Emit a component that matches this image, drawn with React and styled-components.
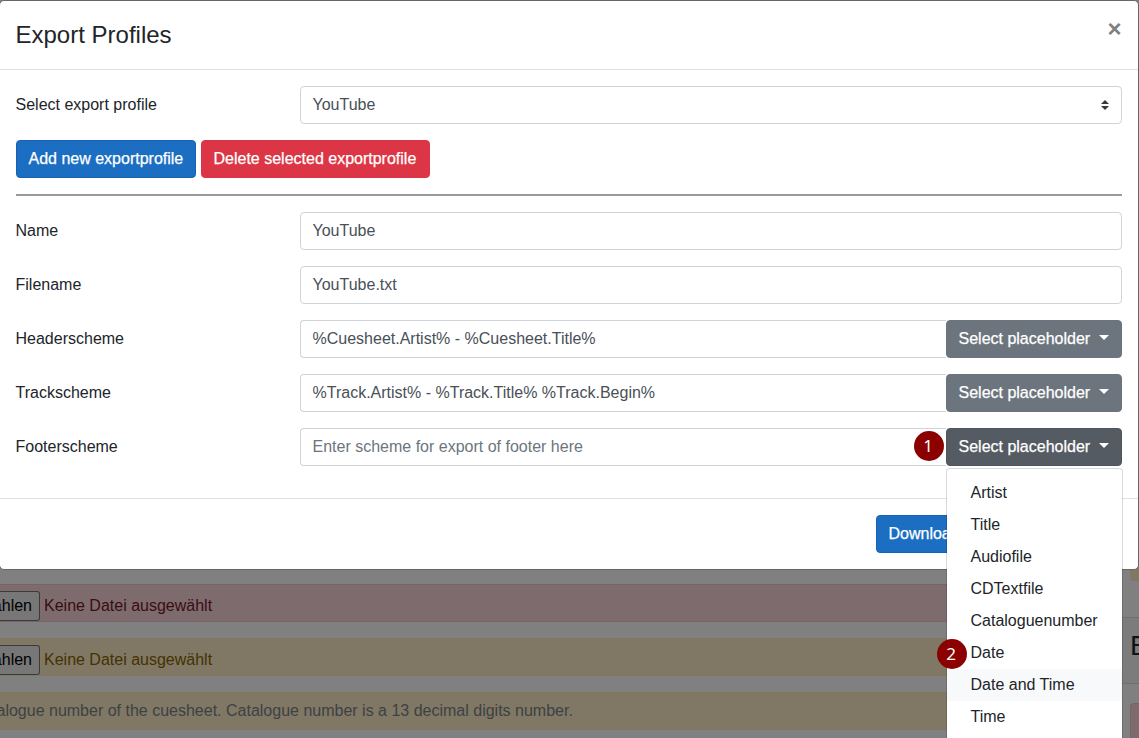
import React from "react";
import styled, { createGlobalStyle, css } from "styled-components";

const GlobalStyle = createGlobalStyle`
  *, *::before, *::after { box-sizing: border-box; }
  html, body { margin: 0; height: 100%; overflow: hidden; }
  body {
    font: 400 16px/1.5 "Liberation Sans", Arial, sans-serif;
    color: #212529;
    background: #808080;
  }
`;

const Screen = styled.div`
  position: relative;
  height: 738px;
  width: 1139px;
  overflow: hidden;
`;

const Page = styled.div`
  display: flex;
  justify-content: space-between;
  height: 100%;
`;

const CuesheetColumn = styled.div`
  display: flex;
  flex-direction: column;
  gap: 16px;
  width: 1017px;
  padding-top: 584px;
`;

const tones = {
  danger: css`background: #7e6b6d; border-color: #7a6366; color: #390e13;`,
  warning: css`background: #807864; border-color: #807760; color: #433202;`,
  muted: css`background: #807864; border-color: #807760; color: #3c4145;`,
};

const Alert = styled.div`
  display: flex;
  align-items: center;
  flex: none;
  gap: 4px;
  height: 38px;
  border: 1px solid;
  border-left: 0;
  white-space: nowrap;
  ${(p) => tones[p.$tone]}
`;

const FileButton = styled.span`
  display: flex;
  align-items: center;
  justify-content: flex-end;
  width: 40px;
  height: 30px;
  margin-top: 6px;
  padding-right: 7px;
  border: 1px solid #3b3b3b;
  border-left: 0;
  border-radius: 0 3px 3px 0;
  background: #777;
  color: #000;
  overflow: hidden;
`;

const FileName = styled.span`
  padding-top: 5px;
`;

const Hint = styled.span`
  margin-left: -3.5px;
`;

const TrackColumn = styled.div`
  display: flex;
  flex-direction: column;
  width: 17px;
  padding-top: 543px;
`;

const TrackField = styled.div`
  flex: none;
  height: 38px;
  margin-left: 8px;
  border: 1px solid;
  border-right: 0;
  border-radius: 4px 0 0 4px;
  ${(p) => tones[p.$tone]}
`;

const TrackHeading = styled.div`
  display: flex;
  align-items: center;
  flex: none;
  height: 67px;
  margin: 36px 0 19px;
  padding: 0 0 9px 8px;
  border: 1px solid #707070;
  border-width: 1px 0;
  background: #7c7c7c;
  font-size: 28px;
  line-height: 1;
  color: #101214;
  overflow: hidden;
`;

const Dialog = styled.section`
  position: absolute;
  top: 0;
  left: -1px;
  width: 1140px;
  height: 570px;
  border: 1px solid #666;
  border-radius: 5px;
  background: #fff;
`;

const DialogHeader = styled.header`
  display: flex;
  justify-content: space-between;
  height: 69px;
  padding: 16px 15.5px;
  border-bottom: 1px solid #dee2e6;
`;

const Title = styled.h4`
  margin: 0;
  font-size: 24px;
  font-weight: 400;
  line-height: 36px;
`;

const CloseButton = styled.button`
  display: flex;
  align-items: flex-start;
  justify-content: center;
  width: 16px;
  padding: 0;
  border: 0;
  background: none;
  color: #808080;
  font: 700 24px/23px "Liberation Sans", Arial, sans-serif;
`;

const DialogBody = styled.div`
  display: flex;
  flex-direction: column;
  gap: 16px;
  padding: 16px 16px 32px;
`;

const FormRow = styled.div`
  display: grid;
  grid-template-columns: 284px 1fr;
  height: 38px;
`;

const Label = styled.label`
  line-height: 24px;
  padding-top: 7px;
  margin-left: -0.5px;
`;

const Field = styled.div`
  display: flex;
  min-width: 0;
`;

const Control = styled.div`
  display: flex;
  align-items: center;
  justify-content: space-between;
  flex: 1;
  padding: 0 12px 1px 11.5px;
  border: 1px solid #ced4da;
  border-right-width: ${(p) => (p.$joined ? 0 : "1px")};
  border-radius: ${(p) => (p.$joined ? "4px 0 0 4px" : "4px")};
  color: ${(p) => (p.$placeholder ? "#6c757d" : "#495057")};
`;

const buttonColors = {
  primary: css`background: #1b6ec2; border-color: #1861ac;`,
  danger: css`background: #dc3545; border-color: #dc3545;`,
  secondary: css`background: #6c757d; border-color: #6c757d;`,
  active: css`background: #545b62; border-color: #4e555b;`,
};

const Button = styled.button`
  display: flex;
  align-items: center;
  flex: none;
  height: 38px;
  width: ${(p) => p.$width}px;
  padding: 0 0 1px 11.5px;
  border: 1px solid;
  border-radius: 4px;
  color: #fff;
  font: inherit;
  -webkit-text-stroke: 0.25px #fff;
  white-space: nowrap;
  ${(p) => buttonColors[p.$color]}
`;

const Caret = styled.span`
  width: 0;
  height: 0;
  margin: 0 0 2px 8.5px;
  border: 5px solid transparent;
  border-top-color: #fff;
  border-bottom: 0;
`;

const ButtonRow = styled.div`
  display: flex;
  gap: 5px;
`;

const Divider = styled.hr`
  width: 100%;
  height: 2px;
  margin: 0;
  border: 0;
  background: #999;
`;

const DialogFooter = styled.footer`
  display: flex;
  padding: 16px 16px 16px 876px;
  border-top: 1px solid #dee2e6;
`;

const Dropdown = styled.div`
  position: relative;
`;

const Menu = styled.ul`
  position: absolute;
  top: 40px;
  left: 0;
  width: 177px;
  margin: 0;
  padding: 8px 0;
  border: 1px solid rgba(0, 0, 0, 0.15);
  border-radius: 4px;
  background: #fff;
  background-clip: padding-box;
  list-style: none;
`;

const MenuItem = styled.li`
  height: 32px;
  padding: 4px 24px 4px 23.5px;
  line-height: 23px;
  background: ${(p) => (p.$hovered ? "#f8f9fa" : "transparent")};
`;

const Badge = styled.span`
  position: absolute;
  left: ${(p) => p.$x}px;
  top: ${(p) => p.$y}px;
  display: flex;
  align-items: center;
  justify-content: center;
  width: 30px;
  height: 30px;
  padding: 0 1px 1px 0;
  border-radius: 50%;
  background: #8b0000;
  color: #fff;
  font: 17px/1 "Noto Sans", "DejaVu Sans", sans-serif;
`;

const menuItems = ["Artist", "Title", "Audiofile", "CDTextfile", "Cataloguenumber", "Date", "Date and Time", "Time", "Profile"];

const SortArrows = () => (
  <svg width="8" height="10" viewBox="0 0 4 5" fill="#343a40">
    <path d="M2 0L0 2h4zm0 5L0 3h4z" />
  </svg>
);

function PlaceholderButton({ active }) {
  return (
    <Button $color={active ? "active" : "secondary"} $width={176}>
      Select placeholder
      <Caret />
    </Button>
  );
}

function FormField({ label, value, placeholder, select, children }) {
  return (
    <FormRow>
      <Label>{label}</Label>
      <Field>
        <Control $joined={Boolean(children)} $placeholder={!value}>
          <span>{value || placeholder}</span>
          {select && <SortArrows />}
        </Control>
        {children}
      </Field>
    </FormRow>
  );
}

export default function App() {
  return (
    <Screen>
      <GlobalStyle />
      <Page>
        <CuesheetColumn>
          <Alert $tone="danger">
            <FileButton>ählen</FileButton>
            <FileName>Keine Datei ausgewählt</FileName>
          </Alert>
          <Alert $tone="warning">
            <FileButton>ählen</FileButton>
            <FileName>Keine Datei ausgewählt</FileName>
          </Alert>
          <Alert $tone="muted">
            <Hint>alogue number of the cuesheet. Catalogue number is a 13 decimal digits number.</Hint>
          </Alert>
        </CuesheetColumn>
        <TrackColumn>
          <TrackField $tone="warning" />
          <TrackHeading>E</TrackHeading>
          <TrackField $tone="danger" />
        </TrackColumn>
      </Page>
      <Dialog>
        <DialogHeader>
          <Title>Export Profiles</Title>
          <CloseButton>×</CloseButton>
        </DialogHeader>
        <DialogBody>
          <FormField label="Select export profile" value="YouTube" select />
          <ButtonRow>
            <Button $color="primary" $width={180}>Add new exportprofile</Button>
            <Button $color="danger" $width={229}>Delete selected exportprofile</Button>
          </ButtonRow>
          <Divider />
          <FormField label="Name" value="YouTube" />
          <FormField label="Filename" value="YouTube.txt" />
          <FormField label="Headerscheme" value="%Cuesheet.Artist% - %Cuesheet.Title%">
            <PlaceholderButton />
          </FormField>
          <FormField label="Trackscheme" value="%Track.Artist% - %Track.Title% %Track.Begin%">
            <PlaceholderButton />
          </FormField>
          <FormField label="Footerscheme" placeholder="Enter scheme for export of footer here">
            <Dropdown>
              <PlaceholderButton active />
              <Menu>
                {menuItems.map((item) => (
                  <MenuItem key={item} $hovered={item === "Date and Time"}>{item}</MenuItem>
                ))}
              </Menu>
              <Badge $x={-32.5} $y={2.5}>1</Badge>
              <Badge $x={-9.5} $y={210.5}>2</Badge>
            </Dropdown>
          </FormField>
        </DialogBody>
        <DialogFooter>
          <Button $color="primary" $width={100}>Download</Button>
        </DialogFooter>
      </Dialog>
    </Screen>
  );
}
